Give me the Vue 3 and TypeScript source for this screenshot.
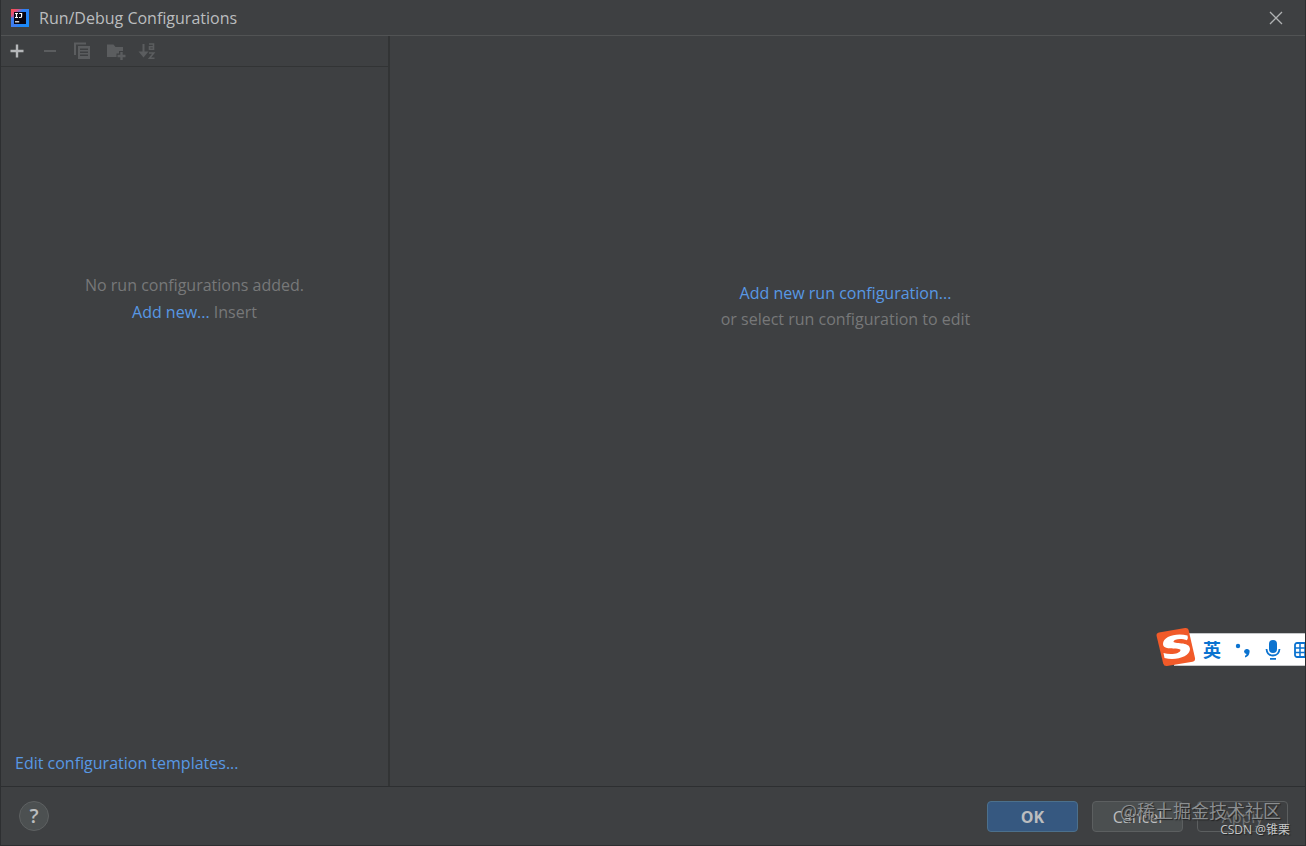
<script setup lang="ts">
import { ref } from 'vue'

const canRemove = ref(false)
const canApply = ref(false)
</script>

<template>
  <main class="dialog">
    <header class="titlebar">
      <svg class="logo" viewBox="0 0 18 18" aria-hidden="true">
        <defs>
          <linearGradient id="logo-edge" x1="0" y1="0" x2="1" y2="1">
            <stop offset="0" stop-color="#fe5145" />
            <stop offset="0.2" stop-color="#e0507e" />
            <stop offset="0.36" stop-color="#2f80f5" />
            <stop offset="1" stop-color="#168bf8" />
          </linearGradient>
        </defs>
        <path d="M0 0H18V18H0Z" fill="url(#logo-edge)" />
        <path d="M0 8L3 10V15H8L5 18H0Z" fill="#3d7df0" />
        <path d="M3 3H15V15H3Z" fill="#080510" />
        <path d="M4 4.5H7M5.5 4.5V8.5M4 8.5H7M8.2 4.5H10.6V7.2Q10.6 8.5 9.3 8.5H8" fill="none" stroke="#fff" stroke-width="1.2" />
        <path d="M4 12.8H8.2" stroke="#fff" stroke-width="1.2" />
      </svg>
      <h1>Run/Debug Configurations</h1>
      <button class="close" type="button" aria-label="Close">
        <svg viewBox="0 0 14 14"><path d="M1 1L13 13M13 1L1 13" stroke="#b0b2b3" stroke-width="1.3" /></svg>
      </button>
    </header>

    <div class="panes">
      <aside class="sidebar">
        <div class="toolbar" role="toolbar" aria-label="Configurations">
          <button type="button" aria-label="Add">
            <svg viewBox="0 0 18 18"><path d="M9 2.5V15.5M2.5 9H15.5" stroke="#b5b7b9" stroke-width="2.4" /></svg>
          </button>
          <button type="button" aria-label="Remove" :disabled="!canRemove">
            <svg viewBox="0 0 18 18"><path d="M3 9H15" stroke="#5b5d5f" stroke-width="2" /></svg>
          </button>
          <button type="button" aria-label="Copy" disabled>
            <svg viewBox="0 0 18 18">
              <path d="M0 0.5H12V2.5H2V13H0Z" fill="#5b5d5f" />
              <path fill-rule="evenodd" d="M4 4H16V17H4ZM6 6.5V8H14V6.5ZM6 9.5V11H14V9.5ZM6 12.5V14H14V12.5Z" fill="#5b5d5f" />
            </svg>
          </button>
          <button type="button" aria-label="New folder" disabled>
            <svg viewBox="0 0 18 18">
              <path d="M0 2.5H6.5L8.5 5H16V9H12V11.5H9.5V15H0Z" fill="#5b5d5f" />
              <path d="M14.5 10V18M10.5 14H18.5" stroke="#5b5d5f" stroke-width="2.4" />
            </svg>
          </button>
          <button type="button" aria-label="Sort" disabled>
            <svg viewBox="0 0 18 18" fill="none" stroke="#5b5d5f">
              <path d="M3.5 2V12" stroke-width="2" />
              <path d="M-1.5 9.500H8.500L3.500 15.500Z" fill="#5b5d5f" stroke="none" />
              <path d="M9 2H13.500V8M13.500 4.700H9.500V7.300H13.500M9 11H13.700L9.500 16.200H14.500" stroke-width="1.600" />
            </svg>
          </button>
        </div>
        <div class="empty">
          <p>No run configurations added.</p>
          <p><a href="#add">Add new...</a> Insert</p>
        </div>
        <a class="templates" href="#templates">Edit configuration templates...</a>
      </aside>
      <section class="details">
        <p><a href="#add">Add new run configuration...</a></p>
        <p>or select run configuration to edit</p>
      </section>
    </div>

    <footer class="footer">
      <button class="help" type="button" aria-label="Help">?</button>
      <div class="actions">
        <button class="action primary" type="button">OK</button>
        <button class="action" type="button">Cancel</button>
        <button class="action" type="button" :disabled="!canApply">Apply</button>
      </div>
    </footer>

    <div class="ime">
      <svg class="ime-logo" viewBox="0 0 42 40" aria-hidden="true">
        <path d="M4 5.5L30 1Q33 .6 33.6 3L40 31Q40.6 34 37.5 34.8L12 39Q9 39.4 8.2 36.5L1.6 9Q1 6.2 4 5.5Z" fill="#f15a29" />
        <path d="M32.500 8.500Q33.500 11 32 13.300C26 11 19 12 18.500 14.500C18 17.500 35 14 35 22C35 29.500 21 34 9.500 31L8.500 26C16 28.500 25.500 26.500 25.500 23C25 20 8 24 8 17C8 9.500 21 5.500 32.500 8.500Z" fill="#fff" />
      </svg>
      <span class="ime-mode">英</span>
      <svg class="ime-punct" viewBox="0 0 16 18" aria-hidden="true">
        <circle cx="3" cy="5" r="2.2" fill="#0b73d0" />
        <path d="M9 10.500A2.800 2.800 0 1 1 14.500 11.500Q14 15.500 10 16.500V14.800Q11.500 14.300 11.500 13Q9.300 12.500 9 10.500Z" fill="#0b73d0" />
      </svg>
      <svg class="ime-mic" viewBox="0 0 16 20" fill="none" stroke="#0b73d0" aria-hidden="true">
        <rect x="4" y="0" width="8" height="13" rx="4" fill="#0b73d0" stroke="none" />
        <path d="M1.500 9Q2 15.500 8 15.500T14.500 9M5 18.800H11" stroke-width="1.800" />
      </svg>
      <svg class="ime-keys" viewBox="0 0 20 16" fill="none" stroke="#0b73d0" aria-hidden="true">
        <rect x="1" y="1" width="18" height="14" rx="2" stroke-width="1.800" />
        <path d="M1 6H19M1 10.500H19M6 1V15M11 1V15M16 1V10" stroke-width="1.500" />
      </svg>
    </div>

    <div class="mark community">@稀土掘金技术社区</div>
    <div class="mark author">CSDN @锥栗</div>
  </main>
</template>

<style>
body {
  background: #3e4042;
}
</style>

<style scoped>
.dialog {
  position: relative;
  display: flex;
  flex-direction: column;
  box-sizing: border-box;
  min-height: 100vh;
  overflow: hidden;
  border: 1px solid #2d2f31;
  border-top: 0;
  background: #3e4042;
  color: #777879;
  font: 16px/26px "Open Sans", "Noto Sans CJK SC", sans-serif;
}
p,
h1 {
  margin: 0;
}
a {
  color: #5898e4;
  text-decoration: none;
}
button {
  padding: 0;
  border: 0;
  background: none;
  color: #bbbdbf;
  font: inherit;
}
svg {
  display: block;
}
.titlebar {
  display: flex;
  align-items: center;
  height: 35px;
  padding: 0 22px 0 10px;
  border-bottom: 1px solid #515354;
}
.logo {
  width: 18px;
  height: 18px;
}
h1 {
  flex: 1;
  margin-left: 10px;
  color: #bbbdbf;
  font-size: 16px;
  font-weight: 400;
}
.close svg {
  width: 14px;
  height: 14px;
}
.panes {
  display: flex;
  flex: 1;
}
.sidebar {
  display: flex;
  flex-direction: column;
  flex: 0 0 387px;
  border-right: 2px solid #323435;
}
.toolbar {
  display: flex;
  align-items: center;
  gap: 15px;
  height: 30px;
  padding-left: 7px;
  border-bottom: 1px solid #323435;
}
.toolbar svg {
  width: 18px;
  height: 18px;
  overflow: visible;
}
.empty {
  flex: 1;
  padding-top: 205px;
  line-height: 27px;
  text-align: center;
}
.templates {
  padding: 0 14px 10px;
}
.details {
  flex: 1;
  padding: 244px 4px 0 0;
  text-align: center;
}
.footer {
  display: flex;
  align-items: center;
  justify-content: space-between;
  height: 58px;
  padding: 0 17px 0 18px;
  border-top: 1px solid #2d2f31;
}
.help {
  width: 30px;
  height: 30px;
  border: 1px solid #5e6162;
  border-radius: 50%;
  background: #4c5051;
  font-size: 20px;
  font-weight: 600;
}
.actions {
  display: flex;
  gap: 14px;
}
.action {
  width: 91px;
  height: 31px;
  padding-top: 2px;
  border: 1px solid #5c5f60;
  border-radius: 4px;
  background: #4b4f50;
}
.action:disabled {
  background: none;
  color: #747677;
}
.primary {
  border-color: #4c708c;
  background: #365880;
  font-weight: 700;
}
.ime {
  position: absolute;
  right: -1px;
  bottom: 179px;
  display: flex;
  align-items: center;
  box-sizing: border-box;
  width: 132px;
  height: 33px;
  padding-left: 28px;
  border: 1px solid #c6c8ca;
  border-right: 0;
  background: #fff;
  color: #0b73d0;
}
.ime-logo {
  position: absolute;
  left: -20px;
  top: -7px;
  width: 42px;
  height: 40px;
}
.ime-mode {
  font-size: 18px;
  font-weight: 700;
}
.ime-punct {
  flex: none;
  width: 16px;
  height: 18px;
  margin-left: 14px;
}
.ime-mic {
  flex: none;
  width: 16px;
  height: 20px;
  margin-left: 14px;
}
.ime-keys {
  flex: none;
  width: 20px;
  height: 16px;
  margin-left: 13px;
}
.mark {
  position: absolute;
  pointer-events: none;
  white-space: nowrap;
}
.community {
  right: 24px;
  bottom: 22px;
  color: #8b8e90;
  font-family: "Noto Sans CJK SC", sans-serif;
  font-size: 18px;
  text-shadow: 1px 1px 1px #222;
}
.author {
  right: 15px;
  bottom: 5px;
  color: #c5c7c8;
  font-size: 12px;
  line-height: 20px;
  text-shadow: 1px 1px 1px #222;
}
</style>
